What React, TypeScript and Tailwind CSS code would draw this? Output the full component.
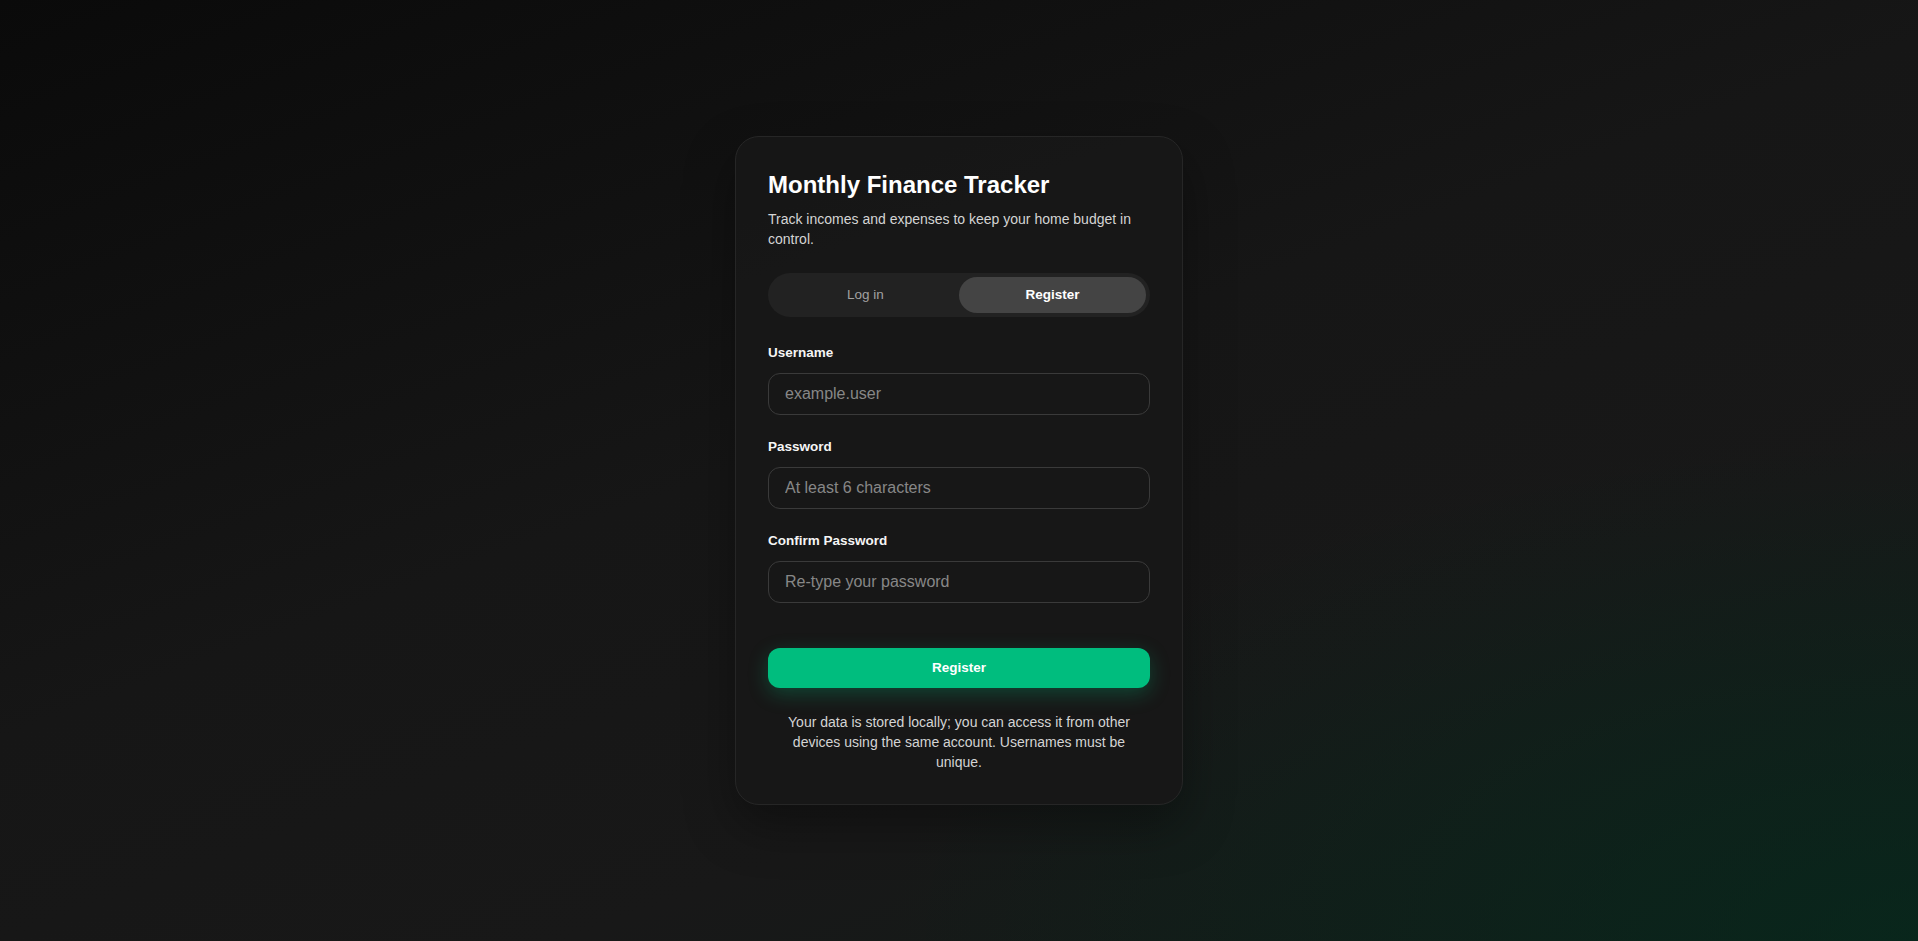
import { useState } from "react";

const Field = ({
  label,
  placeholder,
  type = "text",
}: {
  label: string;
  placeholder: string;
  type?: string;
}) => (
  <div className="flex flex-col">
    <label className="text-[13.5px] leading-5 font-semibold text-neutral-100">
      {label}
    </label>
    <input
      type={type}
      placeholder={placeholder}
      className="mt-2.5 h-[42px] w-full rounded-xl border border-[#3a3a3a] bg-transparent px-4 text-base text-neutral-100 outline-none placeholder:text-[#878787]"
    />
  </div>
);

const App = () => {
  const [mode, setMode] = useState<"login" | "register">("register");

  return (
    <div className="relative flex h-[941px] w-full items-center justify-center overflow-hidden bg-[linear-gradient(160deg,#0a0a0a_0%,#161616_45%,#181818_70%,#111c18_100%)] font-['Liberation_Sans',Arial,sans-serif]">
      <div className="pointer-events-none absolute inset-0 bg-[radial-gradient(ellipse_at_100%_100%,rgba(3,45,30,0.6)_0%,rgba(3,45,30,0)_38%)]" />
      <div className="relative w-[448px] rounded-3xl border border-[#262626] bg-[#171717]/95 p-8 shadow-[0_20px_50px_rgba(0,0,0,0.35)]">
        <h1 className="text-2xl leading-8 font-bold text-white">
          Monthly Finance Tracker
        </h1>
        <p className="mt-2 text-sm leading-5 text-neutral-300">
          Track incomes and expenses to keep your home budget in control.
        </p>

        <div className="mt-6 flex h-11 rounded-full bg-[#222222] p-1">
          <button
            onClick={() => setMode("login")}
            className={`flex-1 rounded-full text-[13.5px] ${
              mode === "login"
                ? "bg-[#444444] font-semibold text-white"
                : "text-neutral-400"
            }`}
          >
            Log in
          </button>
          <button
            onClick={() => setMode("register")}
            className={`flex-1 rounded-full text-[13.5px] ${
              mode === "register"
                ? "bg-[#444444] font-semibold text-white"
                : "text-neutral-400"
            }`}
          >
            Register
          </button>
        </div>

        <div className="mt-[26px] flex flex-col gap-[22px]">
          <Field label="Username" placeholder="example.user" />
          <Field label="Password" placeholder="At least 6 characters" type="password" />
          <Field label="Confirm Password" placeholder="Re-type your password" type="password" />
        </div>

        <button className="mt-[45px] h-10 w-full rounded-xl bg-[#00bd7e] text-[13.5px] font-bold text-white shadow-[0_6px_20px_rgba(0,189,126,0.28)]">
          Register
        </button>

        <p className="mt-6 px-3 text-center text-sm leading-5 text-neutral-300">
          Your data is stored locally; you can access it from other devices
          using the same account. Usernames must be unique.
        </p>
      </div>
    </div>
  );
};

export default App;
